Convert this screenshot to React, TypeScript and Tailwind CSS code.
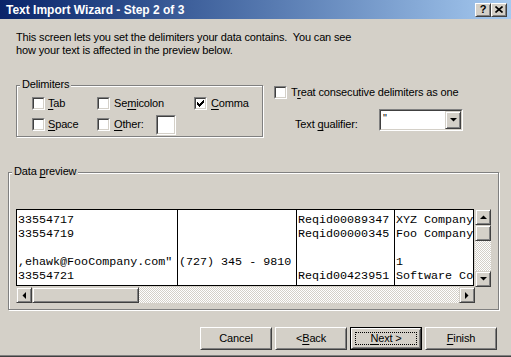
import React from "react";

const raised =
  "border border-t-[#d4d0c8] border-l-[#d4d0c8] border-r-[#404040] border-b-[#404040] shadow-[inset_1px_1px_0_#ffffff,inset_-1px_-1px_0_#808080] bg-[#d4d0c8]";
const pushBtn =
  "border border-t-white border-l-white border-r-[#404040] border-b-[#404040] shadow-[inset_1px_1px_0_#d4d0c8,inset_-1px_-1px_0_#808080] bg-[#d4d0c8]";
const sunkenOuter =
  "border border-t-[#808080] border-l-[#808080] border-r-white border-b-white";
const sunkenInner =
  "border border-t-[#404040] border-l-[#404040] border-r-[#d4d0c8] border-b-[#d4d0c8] bg-white";
const dither =
  "bg-[image:repeating-conic-gradient(#ffffff_0_25%,#d4d0c8_0_50%)] bg-[length:2px_2px]";

function CheckMark() {
  const cols = [2, 3, 4, 3, 2, 1, 0];
  return (
    <svg width="7" height="7" viewBox="0 0 7 7" shapeRendering="crispEdges">
      {cols.map((y, x) => (
        <rect key={x} x={x} y={y} width="1" height="3" fill="#000" />
      ))}
    </svg>
  );
}

function Check({ checked }: { checked?: boolean }) {
  return (
    <div className={`w-[13px] h-[13px] shrink-0 ${sunkenOuter}`}>
      <div className={`w-full h-full flex items-center justify-center ${sunkenInner}`}>
        {checked && <CheckMark />}
      </div>
    </div>
  );
}

function Arrow({ dir }: { dir: "up" | "down" | "left" | "right" }) {
  const pts: Record<string, string> = {
    up: "0,4 7,4 3.5,0.5",
    down: "0,0 7,0 3.5,3.5",
    left: "4,0 4,7 0.5,3.5",
    right: "0,0 0,7 3.5,3.5",
  };
  const w = dir === "up" || dir === "down" ? 7 : 4;
  const h = dir === "up" || dir === "down" ? 4 : 7;
  return (
    <svg width={w} height={h} viewBox={`0 0 ${w} ${h}`}>
      <polygon points={pts[dir]} fill="#000" />
    </svg>
  );
}

function ScrollBtn({ dir }: { dir: "up" | "down" | "left" | "right" }) {
  return (
    <div className={`w-[16px] h-[16px] shrink-0 flex items-center justify-center ${raised}`}>
      <Arrow dir={dir} />
    </div>
  );
}

function GroupBox({
  legend,
  className,
  children,
}: {
  legend: React.ReactNode;
  className: string;
  children?: React.ReactNode;
}) {
  return (
    <div
      className={`relative border border-[#808080] shadow-[inset_1px_1px_0_#ffffff,1px_1px_0_#ffffff] ${className}`}
    >
      <div className="absolute left-[3px] top-[-8px] px-[2px] bg-[#d4d0c8] leading-[13px]">
        {legend}
      </div>
      {children}
    </div>
  );
}

const U = ({ children }: { children: React.ReactNode }) => (
  <span className="underline underline-offset-[2px]">{children}</span>
);

const rows: string[][] = [
  ["33554717", "", "Reqid00089347", "XYZ Company"],
  ["33554719", "", "Reqid00000345", "Foo Company"],
  ["", "", "", ""],
  [',ehawk@FooCompany.com"', "(727) 345 - 9810", "", "1"],
  ["33554721", "", "Reqid00423951", "Software Company"],
];

function Column({ idx, className }: { idx: number; className: string }) {
  return (
    <div className={`flex flex-col pt-[3px] overflow-hidden ${className}`}>
      {rows.map((r, i) => (
        <div key={i} className="h-[14px] leading-[14px] whitespace-pre">
          {r[idx]}
        </div>
      ))}
    </div>
  );
}

function Button({ children, def }: { children: React.ReactNode; def?: boolean }) {
  if (def) {
    return (
      <div className="w-[72px] h-[23px] border border-black">
        <div className={`w-full h-full flex items-center justify-center ${pushBtn}`}>
          <div className="w-[62px] h-[13px] border border-dotted border-black flex items-center justify-center leading-[11px]">
            {children}
          </div>
        </div>
      </div>
    );
  }
  return (
    <div className={`w-[72px] h-[23px] flex items-center justify-center ${pushBtn}`}>
      {children}
    </div>
  );
}

export default function App() {
  return (
    <div className="w-[511px] h-[357px] bg-[#d4d0c8] flex flex-col overflow-hidden text-black text-[11px] tracking-[-0.15px] font-['Liberation_Sans',Arial,sans-serif]">
      {/* Title bar */}
      <div className="h-[19px] shrink-0 flex items-center bg-linear-to-r from-[#0a246a] to-[#a6caf0]">
        <div className="pl-[6px] pt-[1px] text-white font-bold text-[12px] leading-[18px] tracking-normal">
          Text Import Wizard - Step 2 of 3
        </div>
        <div className="ml-auto mr-[4px] flex">
          <div className={`w-[16px] h-[14px] flex items-center justify-center font-bold text-[11px] leading-[11px] ${pushBtn}`}>
            ?
          </div>
          <div className={`w-[16px] h-[14px] flex items-center justify-center ${pushBtn}`}>
            <svg width="8" height="7" viewBox="0 0 8 7">
              <path d="M0.5 0.5 L7.5 6.5 M7.5 0.5 L0.5 6.5" stroke="#000" strokeWidth="1.6" />
            </svg>
          </div>
        </div>
      </div>

      {/* Description */}
      <div className="mt-[12px] ml-[16px] leading-[13px]">
        This screen lets you set the delimiters your data contains.&nbsp; You can see
        <br />
        how your text is affected in the preview below.
      </div>

      {/* Options row */}
      <div className="mt-[28px] flex items-start">
        <GroupBox legend="Delimiters" className="ml-[16px] w-[247px] h-[52px] pl-[15px] pt-[11px]">
          <div className="flex items-center h-[13px]">
            <div className="w-[65px] flex items-center gap-[3px]">
              <Check />
              <span className="leading-[13px]">
                <U>T</U>ab
              </span>
            </div>
            <div className="w-[97px] flex items-center gap-[4px]">
              <Check />
              <span className="leading-[13px]">
                Se<U>m</U>icolon
              </span>
            </div>
            <div className="flex items-center gap-[4px]">
              <Check checked />
              <span className="leading-[13px]">
                <U>C</U>omma
              </span>
            </div>
          </div>
          <div className="flex items-center h-[13px] mt-[8px]">
            <div className="w-[65px] flex items-center gap-[3px]">
              <Check />
              <span className="leading-[13px]">
                <U>S</U>pace
              </span>
            </div>
            <div className="flex items-center gap-[4px]">
              <Check />
              <span className="leading-[13px]">
                <U>O</U>ther:
              </span>
              <div className={`ml-[8px] w-[20px] h-[20px] ${sunkenOuter}`}>
                <div className={`w-full h-full ${sunkenInner}`} />
              </div>
            </div>
          </div>
        </GroupBox>

        <div className="ml-[11px] flex flex-col">
          <div className="mt-[1px] flex items-center gap-[4px]">
            <Check />
            <span className="leading-[13px]">
              T<U>r</U>eat consecutive delimiters as one
            </span>
          </div>
          <div className="mt-[10px] flex items-start">
            <span className="ml-[21px] mt-[9px] w-[84px] leading-[13px]">
              Text <U>q</U>ualifier:
            </span>
            <div className={`w-[84px] h-[22px] ${sunkenOuter}`}>
              <div className={`w-full h-full flex ${sunkenInner}`}>
                <div className="flex-1 pl-[2px] leading-[14px]">"</div>
                <div className={`w-[16px] h-full flex items-center justify-center ${raised}`}>
                  <Arrow dir="down" />
                </div>
              </div>
            </div>
          </div>
        </div>
      </div>

      {/* Data preview */}
      <GroupBox
        legend={
          <span>
            Data <U>p</U>review
          </span>
        }
        className="mt-[35px] ml-[8px] w-[491px] h-[138px] pl-[7px] pt-[36px]"
      >
        <div className="flex items-start">
          <div className="w-[458px] h-[77px] border border-black bg-white flex text-[11.7px] tracking-normal font-['Liberation_Mono','Courier_New',monospace]">
            <Column idx={0} className="w-[161px] pl-[1px] border-r border-black" />
            <Column idx={1} className="w-[119px] pl-[1px] border-r border-black" />
            <Column idx={2} className="w-[98px] pl-[1px] border-r border-black" />
            <Column idx={3} className="flex-1 pl-[1px]" />
          </div>
          <div className="ml-[1px] w-[16px] h-[78px] flex flex-col">
            <ScrollBtn dir="up" />
            <div className={`w-[16px] h-[16px] ${raised}`} />
            <div className={`flex-1 ${dither}`} />
            <ScrollBtn dir="down" />
          </div>
        </div>
        <div className="flex">
          <div className="w-[459px] h-[16px] flex">
            <ScrollBtn dir="left" />
            <div className={`w-[107px] h-[16px] ${raised}`} />
            <div className={`flex-1 ${dither}`} />
            <ScrollBtn dir="right" />
          </div>
        </div>
      </GroupBox>

      {/* Buttons */}
      <div className="mt-[17px] flex justify-end gap-[3px] pr-[14px]">
        <Button>Cancel</Button>
        <Button>
          &lt; <U>B</U>ack
        </Button>
        <Button def>
          <U>N</U>ext &gt;
        </Button>
        <Button>
          <U>F</U>inish
        </Button>
      </div>

      <div className="mt-auto h-[2px] border-t border-t-[#808080] border-b border-b-[#404040]" />
    </div>
  );
}
